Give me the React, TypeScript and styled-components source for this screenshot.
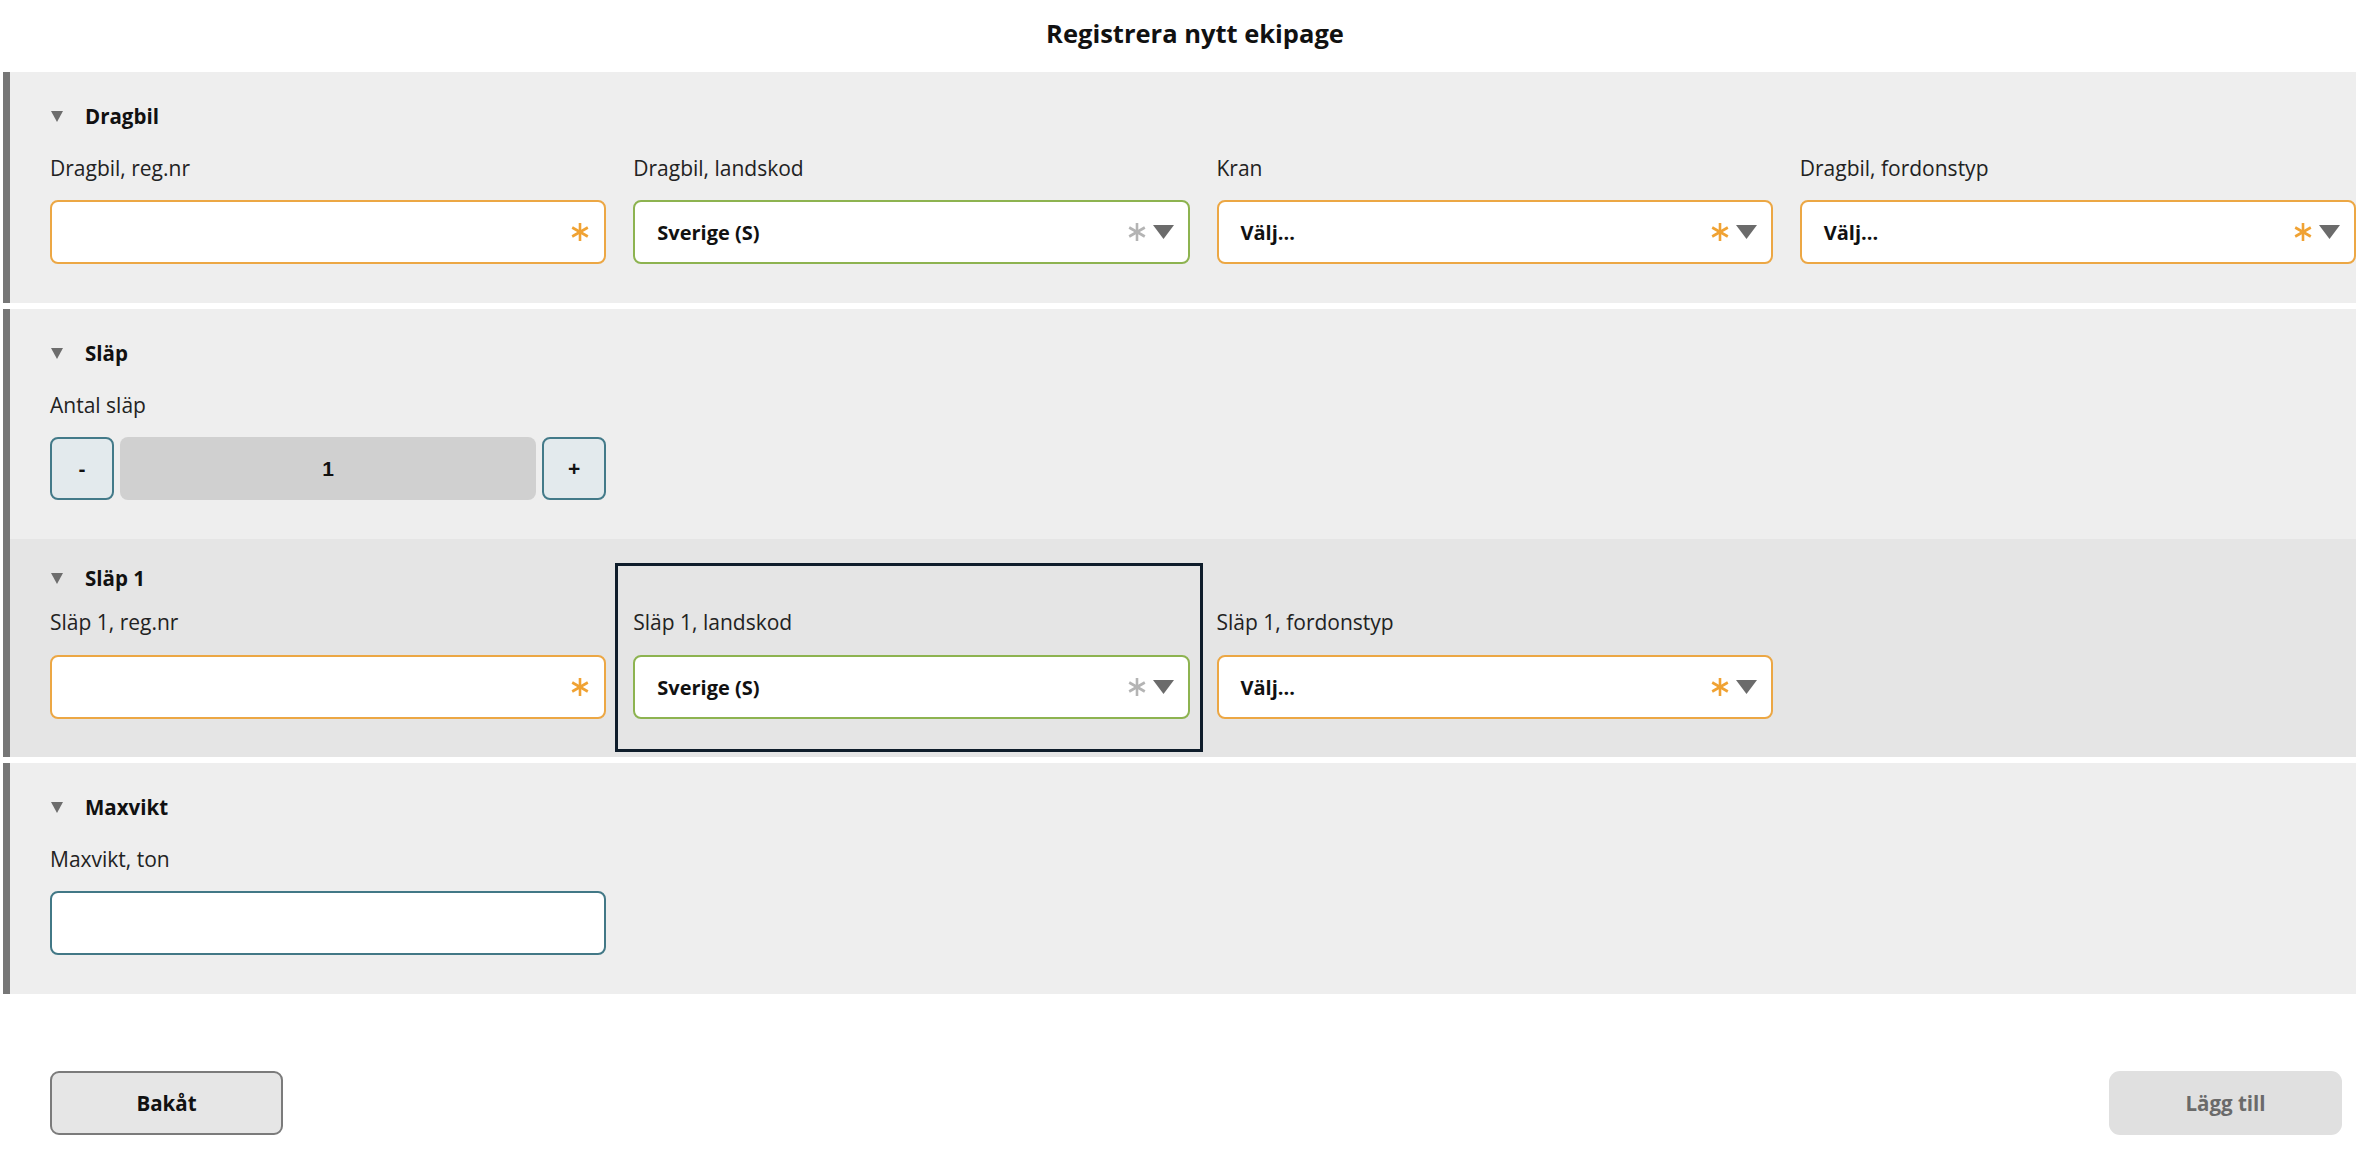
import React from 'react'
import styled, { createGlobalStyle, css } from 'styled-components'

const GlobalStyle = createGlobalStyle`
  body {
    margin: 0;
    background: #ffffff;
    font-family: "Open Sans", "Liberation Sans", sans-serif;
    color: #111111;
  }
  * {
    box-sizing: border-box;
  }
`

const Page = styled.div`
  width: 2356px;
  display: flex;
  flex-direction: column;
`

const Title = styled.h1`
  margin: 0;
  height: 72px;
  padding: 0 0 6px 34px;
  display: flex;
  align-items: center;
  justify-content: center;
  font-size: 25.5px;
  font-weight: 700;
  color: #111111;
`

const Group = styled.section`
  margin: 0 0 6px 3px;
  border-left: 7px solid #777777;
  background: #eeeeee;
`

const Panel = styled.div<{ $nested?: boolean }>`
  padding: 30px 0 39px 40px;
  ${({ $nested }) =>
    $nested &&
    css`
      background: #e5e5e5;
      padding: 25px 0 38px 40px;
    `}
`

const Heading = styled.div`
  display: flex;
  align-items: center;
  gap: 22px;
  height: 28px;
  padding-left: 1px;
  font-size: 20.5px;
  font-weight: 700;
  color: #111111;
`

const Grid = styled.div<{ $nested?: boolean }>`
  display: grid;
  grid-template-columns: repeat(4, 1fr);
  column-gap: 27px;
  margin-top: ${({ $nested }) => ($nested ? '16px' : '24px')};
`

const Field = styled.div<{ $focused?: boolean; $nested?: boolean }>`
  display: flex;
  flex-direction: column;
  gap: ${({ $nested }) => ($nested ? '19px' : '18px')};
  position: relative;

  ${({ $focused }) =>
    $focused &&
    css`
      &::after {
        content: '';
        position: absolute;
        top: -45px;
        bottom: -33px;
        left: -18px;
        right: -13px;
        border: 3px solid #0f1d2b;
        pointer-events: none;
      }
    `}
`

const Label = styled.label`
  line-height: 28px;
  font-size: 21px;
  color: #222222;
`

const borderColors = {
  required: '#eca744',
  valid: '#8db350',
  plain: '#427886',
}

const Box = styled.div<{ $tone: keyof typeof borderColors }>`
  height: 64px;
  display: flex;
  align-items: center;
  gap: 6px;
  padding: 0 14px 0 22px;
  background: #ffffff;
  border: 2px solid ${({ $tone }) => borderColors[$tone]};
  border-radius: 8px;
`

const TextInput = styled.input`
  flex: 1;
  min-width: 0;
  border: none;
  outline: none;
  background: transparent;
  font: inherit;
  font-size: 20px;
`

const Value = styled.span`
  flex: 1;
  font-size: 20px;
  font-weight: 700;
  color: #111111;
`

const Stepper = styled.div`
  display: grid;
  grid-template-columns: 64px 1fr 64px;
  gap: 6px;
  height: 63px;
`

const StepButton = styled.button`
  border: 2px solid #437a89;
  border-radius: 8px;
  background: #e3eaed;
  font-family: "Liberation Sans", Arial, sans-serif;
  font-size: 21px;
  font-weight: 700;
  color: #111111;
  padding: 0;
`

const StepValue = styled.div`
  display: flex;
  align-items: center;
  justify-content: center;
  border-radius: 8px;
  background: #d0d0d0;
  font-family: "Liberation Sans", Arial, sans-serif;
  font-size: 21px;
  font-weight: 700;
`

const Footer = styled.div`
  display: flex;
  justify-content: space-between;
  padding: 71px 14px 0 50px;
`

const Button = styled.button<{ $disabled?: boolean }>`
  width: 233px;
  height: 64px;
  border-radius: 9px;
  font-family: "Open Sans", sans-serif;
  font-size: 20.5px;
  font-weight: 700;
  border: 2px solid #7b7b7b;
  background: #e6e6e6;
  color: #111111;

  ${({ $disabled }) =>
    $disabled &&
    css`
      border: none;
      border-radius: 11px;
      background: #e0e0e0;
      color: #6a6a6a;
    `}
`

const Caret = () => (
  <svg width="12" height="11" viewBox="0 0 12 11">
    <polygon points="0,0 12,0 6,11" fill="#6d6d6d" />
  </svg>
)

const DropArrow = () => (
  <svg width="21" height="14" viewBox="0 0 21 14">
    <polygon points="0,0 21,0 10.5,14" fill="#6b6b6b" />
  </svg>
)

const Asterisk = ({ color }: { color: string }) => (
  <svg width="20" height="20" viewBox="0 0 20 20">
    <g stroke={color} strokeWidth="2.6" strokeLinecap="butt">
      <line x1="10" y1="1" x2="10" y2="19" />
      <line x1="2.2" y1="5.5" x2="17.8" y2="14.5" />
      <line x1="2.2" y1="14.5" x2="17.8" y2="5.5" />
    </g>
  </svg>
)

type FieldDef = {
  label: string
  kind: 'text' | 'select'
  value?: string
  tone: keyof typeof borderColors
  required?: boolean
  focused?: boolean
}

const FormField = ({ def, nested }: { def: FieldDef; nested?: boolean }) => (
  <Field $focused={def.focused} $nested={nested}>
    <Label>{def.label}</Label>
    <Box $tone={def.tone}>
      {def.kind === 'text' ? <TextInput /> : <Value>{def.value}</Value>}
      {def.required && <Asterisk color={def.tone === 'valid' ? '#b4b4b4' : '#f0a233'} />}
      {def.kind === 'select' && <DropArrow />}
    </Box>
  </Field>
)

const dragbil: FieldDef[] = [
  { label: 'Dragbil, reg.nr', kind: 'text', tone: 'required', required: true },
  { label: 'Dragbil, landskod', kind: 'select', value: 'Sverige (S)', tone: 'valid', required: true },
  { label: 'Kran', kind: 'select', value: 'Välj...', tone: 'required', required: true },
  { label: 'Dragbil, fordonstyp', kind: 'select', value: 'Välj...', tone: 'required', required: true },
]

const slap1: FieldDef[] = [
  { label: 'Släp 1, reg.nr', kind: 'text', tone: 'required', required: true },
  { label: 'Släp 1, landskod', kind: 'select', value: 'Sverige (S)', tone: 'valid', required: true, focused: true },
  { label: 'Släp 1, fordonstyp', kind: 'select', value: 'Välj...', tone: 'required', required: true },
]

const App = () => {
  return (
    <Page>
      <GlobalStyle />
      <Title>Registrera nytt ekipage</Title>

      <Group>
        <Panel>
          <Heading>
            <Caret />
            Dragbil
          </Heading>
          <Grid>
            {dragbil.map((f) => (
              <FormField key={f.label} def={f} />
            ))}
          </Grid>
        </Panel>
      </Group>

      <Group>
        <Panel>
          <Heading>
            <Caret />
            Släp
          </Heading>
          <Grid>
            <Field>
              <Label>Antal släp</Label>
              <Stepper>
                <StepButton>-</StepButton>
                <StepValue>1</StepValue>
                <StepButton>+</StepButton>
              </Stepper>
            </Field>
          </Grid>
        </Panel>
        <Panel $nested>
          <Heading>
            <Caret />
            Släp 1
          </Heading>
          <Grid $nested>
            {slap1.map((f) => (
              <FormField key={f.label} def={f} nested />
            ))}
          </Grid>
        </Panel>
      </Group>

      <Group>
        <Panel>
          <Heading>
            <Caret />
            Maxvikt
          </Heading>
          <Grid>
            <FormField def={{ label: 'Maxvikt, ton', kind: 'text', tone: 'plain' }} />
          </Grid>
        </Panel>
      </Group>

      <Footer>
        <Button>Bakåt</Button>
        <Button $disabled>Lägg till</Button>
      </Footer>
    </Page>
  )
}

export default App
